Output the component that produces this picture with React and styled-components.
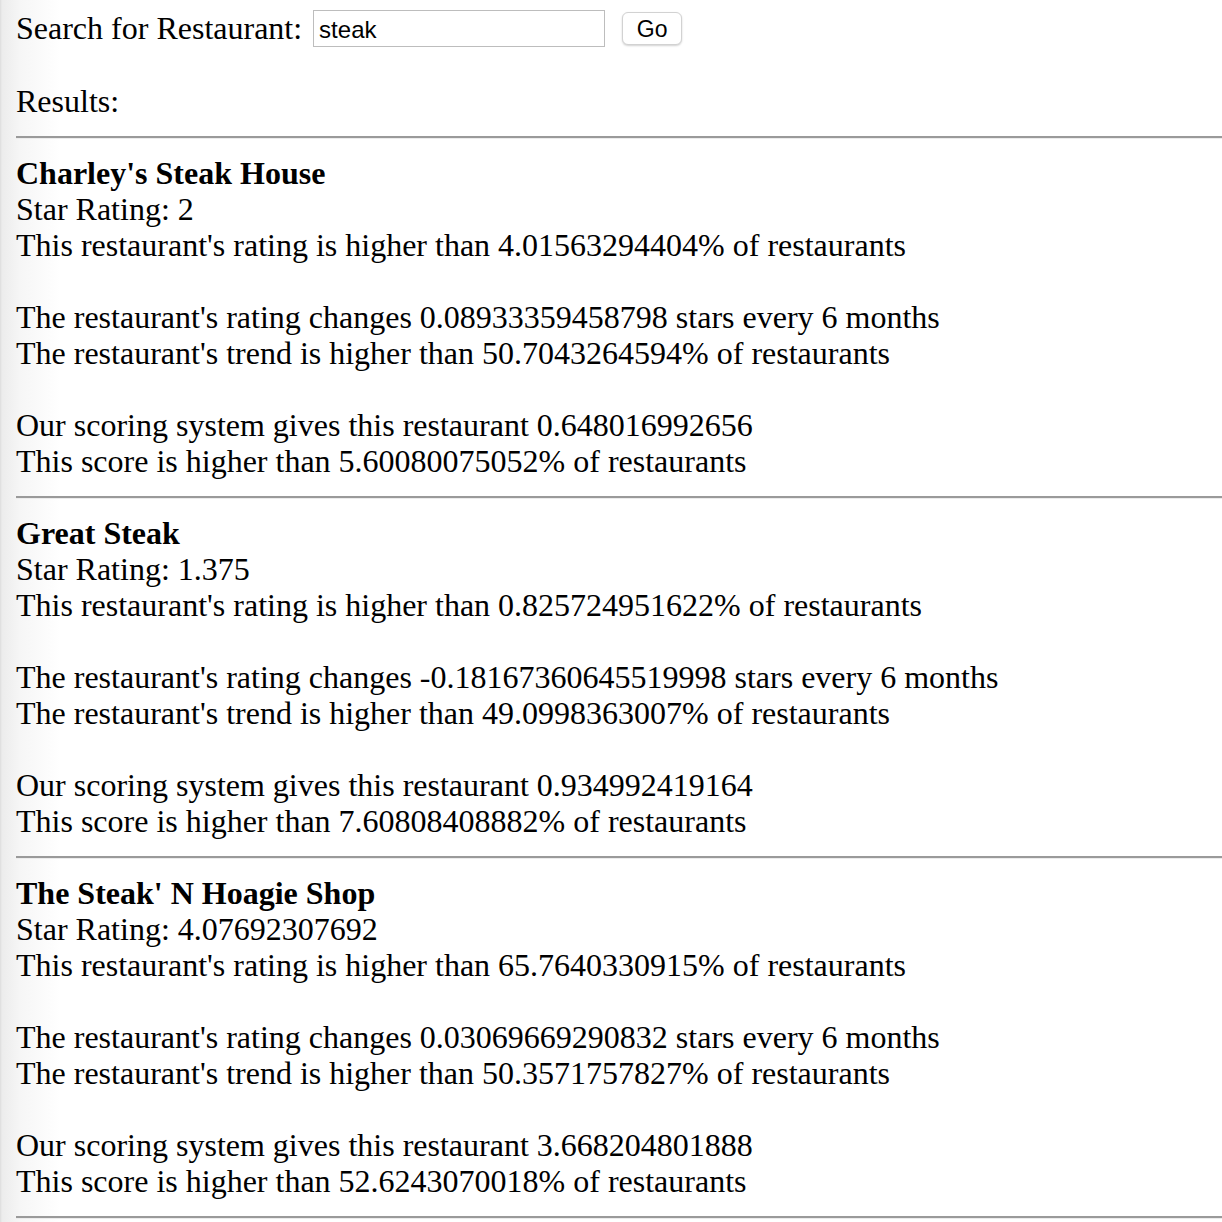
import React from 'react'
import styled, { createGlobalStyle } from 'styled-components'

const results = [
    {
        name: "Charley's Steak House",
        stars: '2',
        ratingPct: '4.01563294404',
        change: '0.08933359458798',
        trendPct: '50.7043264594',
        score: '0.648016992656',
        scorePct: '5.60080075052',
    },
    {
        name: 'Great Steak',
        stars: '1.375',
        ratingPct: '0.825724951622',
        change: '-0.18167360645519998',
        trendPct: '49.0998363007',
        score: '0.934992419164',
        scorePct: '7.60808408882',
    },
    {
        name: "The Steak' N Hoagie Shop",
        stars: '4.07692307692',
        ratingPct: '65.7640330915',
        change: '0.03069669290832',
        trendPct: '50.3571757827',
        score: '3.668204801888',
        scorePct: '52.6243070018',
    },
]

const App = () => (
    <>
        <GlobalStyle />
        <Page>
            <SearchRow>
                <Label>Search for Restaurant:</Label>
                <SearchInput defaultValue="steak" />
                <GoButton>Go</GoButton>
            </SearchRow>
            <ResultsTitle>Results:</ResultsTitle>
            <Rule />
            { results.map(r => (
                <div key={ r.name }>
                    <Name>{ r.name }</Name>
                    <Line>Star Rating: { r.stars }</Line>
                    <Line>This restaurant's rating is higher than { r.ratingPct }% of restaurants</Line>
                    <Blank />
                    <Line>The restaurant's rating changes { r.change } stars every 6 months</Line>
                    <Line>The restaurant's trend is higher than { r.trendPct }% of restaurants</Line>
                    <Blank />
                    <Line>Our scoring system gives this restaurant { r.score }</Line>
                    <Line>This score is higher than { r.scorePct }% of restaurants</Line>
                    <Rule />
                </div>
            )) }
        </Page>
    </>
)

// style
const GlobalStyle = createGlobalStyle`
    html, body {
        margin: 0;
        background: linear-gradient(to right, #dcdcdc 0px, #ececec 2px, #f6f6f6 20px, #ffffff 60px);
        overflow: hidden;
    }
`

const Page = styled.div`
    padding: 10px 0 0 16px;
    font-family: "Liberation Serif", "Times New Roman", serif;
    font-size: 32px;
    line-height: 36px;
    color: #000;
`

const SearchRow = styled.div`
    display: flex;
    align-items: center;
    height: 37px;
`

const Label = styled.span`
    margin-top: -2px;
`

const SearchInput = styled.input`
    box-sizing: border-box;
    width: 292px;
    height: 37px;
    margin-left: 11px;
    padding: 2px 5px 0;
    border: 1.5px solid #bdbdbd;
    background: #fff;
    font-family: "Liberation Sans", Arial, sans-serif;
    font-size: 24px;
    color: #000;
    outline: none;
`

const GoButton = styled.button`
    box-sizing: border-box;
    width: 60px;
    height: 33px;
    margin-left: 17px;
    padding: 2px 0 0;
    border: 1px solid #d2d2d2;
    border-radius: 6px;
    background: #fff;
    box-shadow: 0 1px 2px rgba(0, 0, 0, 0.18);
    font-family: "Liberation Sans", Arial, sans-serif;
    font-size: 23px;
    color: #000;
`

const ResultsTitle = styled.div`
    margin-top: 36px;
`

const Rule = styled.hr`
    margin: 17px 0 16px 0;
    height: 0;
    border: 0;
    border-top: 2px solid #9a9a9a;
    border-bottom: 1px solid #ececec;
`

const Name = styled.div`
    font-weight: bold;
`

const Line = styled.div``

const Blank = styled.div`
    height: 36px;
`

export default App
